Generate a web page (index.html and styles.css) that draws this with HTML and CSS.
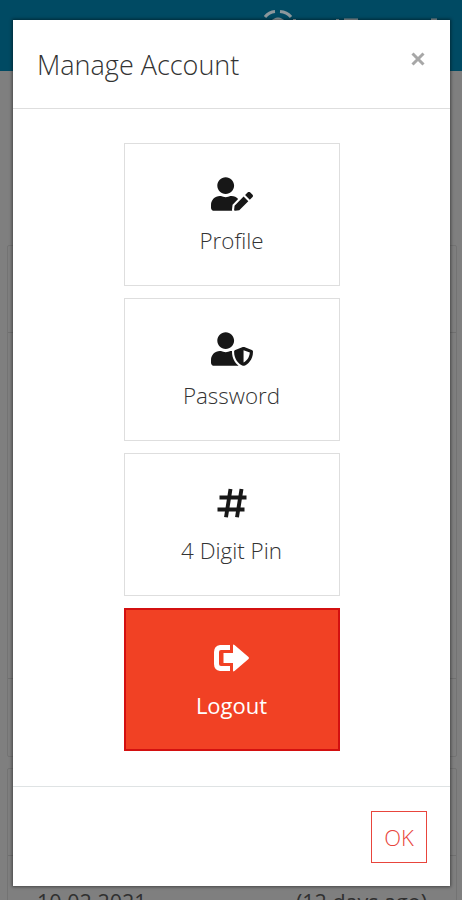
FILE: index.html
```html
<!DOCTYPE html>
<html lang="en">
<head>
<meta charset="utf-8">
<title>Manage Account</title>
<link rel="stylesheet" href="styles.css">
</head>
<body>
<div class="page">
  <header class="topbar">
    <svg width="222" height="30" viewBox="0 0 222 30" fill="none" stroke="#8d989c" stroke-width="3">
      <path d="M25 17Q29 12 35 11.500M40 11.500Q47 12 51 17"/>
      <path d="M31 23Q38 15 45 23M53 20.500h3M96 20.500h3M104 20h14M191 20h6"/>
    </svg>
  </header>
  <section class="panel first"><div class="panel-head"></div><div class="panel-foot"></div></section>
  <section class="panel second"><div class="panel-head"></div><div class="row"><span>10.02.2021</span><span>(12 days ago)</span></div></section>
</div>
<div class="modal" role="dialog" aria-labelledby="title">
  <header class="modal-head">
    <h1 id="title">Manage Account</h1>
    <button class="close" aria-label="Close"><svg width="14" height="14" viewBox="0 0 14 14"><path d="M1.500 1.500l11 11M12.500 1.500l-11 11" stroke="#a7a7a7" stroke-width="3"/></svg></button>
  </header>
  <main class="modal-body">
    <button class="tile">
      <svg width="42" height="34" viewBox="0 0 640 512" fill="currentColor"><path d="M224 256c70.700 0 128-57.300 128-128S294.700 0 224 0 96 57.300 96 128s57.300 128 128 128zm89.600 32h-16.700c-22.200 10.200-46.900 16-72.900 16s-50.600-5.800-72.900-16h-16.700C60.200 288 0 348.200 0 422.400V464c0 26.500 21.500 48 48 48h274.900c-2.400-6.800-3.400-14-2.600-21.300l6.800-60.900 1.200-11.100 7.900-7.900 77.300-77.300c-24.500-27.700-60-45.500-99.900-45.500zm45.300 145.300l-6.800 61c-1.100 10.200 7.500 18.800 17.600 17.600l60.900-6.800 137.900-137.900-71.700-71.700-137.900 137.800zM633 268.900L595.100 231c-9.300-9.300-24.500-9.300-33.800 0l-37.800 37.800-4.100 4.100 71.800 71.700 41.800-41.800c9.300-9.400 9.300-24.500 0-33.900z"/></svg>
      <span>Profile</span>
    </button>
    <button class="tile">
      <svg width="42" height="34" viewBox="0 0 640 512" fill="currentColor"><path d="M622.300 271.100l-115.200-45c-4.100-1.600-12.600-3.700-22.200 0l-115.200 45c-10.700 4.200-17.700 14-17.700 24.900 0 111.600 68.700 188.800 132.900 213.900 9.600 3.700 18 1.600 22.200 0C558.400 489.900 640 420.500 640 296c0-10.900-7-20.700-17.700-24.900zM496 462.400V273.300l95.500 37.300c-5.600 87.100-60.900 135.400-95.500 151.800zM224 256c70.700 0 128-57.300 128-128S294.700 0 224 0 96 57.300 96 128s57.300 128 128 128zm96 40c0-2.500.8-4.800 1.100-7.200-2.500-.1-4.900-.8-7.500-.8h-16.700c-22.200 10.200-46.900 16-72.900 16s-50.600-5.800-72.900-16h-16.700C60.200 288 0 348.200 0 422.400V464c0 26.500 21.500 48 48 48h352c6.800 0 13.300-1.500 19.200-4-54-42.900-99.200-116.700-99.200-212z"/></svg>
      <span>Password</span>
    </button>
    <button class="tile">
      <svg width="42" height="34" viewBox="0 0 42 34" fill="none" stroke="currentColor" stroke-width="3.900" stroke-linejoin="round"><path d="M15 30.300L19.500 2M26 30.300L30.500 2M8.500 10.500H35.500M6.500 22.500H33.500"/></svg>
      <span>4 Digit Pin</span>
    </button>
    <button class="tile danger">
      <svg width="42" height="34" viewBox="1 1 42 34" fill="#fff"><path d="M10 4h10v5H11q-2 0-2 2v12q0 2 2 2h9v5h-10q-6-1-6-7v-12q0-6 6-7z"/><path d="M13.500 12H23V4.500q0-1.500 1.500-.5L38.500 16q1 1 0 2L24.500 30q-1.500 1-1.500-.5V22h-9.500z"/></svg>
      <span>Logout</span>
    </button>
  </main>
  <footer class="modal-foot"><button class="ok">OK</button></footer>
</div>
</body>
</html>
```
FILE: styles.css
```css
* { box-sizing: border-box; }
body { margin: 0; height: 900px; overflow: hidden; background: #7f7f7f; font-family: "Open Sans", sans-serif; font-weight: 300; }
h1, button { margin: 0; padding: 0; font: inherit; }
.page { height: 900px; overflow: hidden; }
.topbar { height: 71px; background: #004a63; display: flex; justify-content: flex-end; }
.panel { margin: 0 5px 0 7px; border: 1px solid #737373; border-radius: 2px; }
.first { margin-top: 174px; height: 512px; display: flex; flex-direction: column; justify-content: space-between; }
.second { margin-top: 11px; height: 160px; }
.panel-head { height: 87px; border-bottom: 1px solid #707070; }
.panel-foot { height: 78px; border-top: 1px solid #707070; }
.row { display: flex; justify-content: space-between; padding: 32px 29px 0 29px; font-size: 21.5px; line-height: 28px; font-weight: 400; color: #303030; }
.modal { position: absolute; left: 13px; top: 20px; width: 437px; height: 866px; background: #fff; box-shadow: 0 0 3px 1px rgba(0, 0, 0, .45); display: flex; flex-direction: column; }
.modal-head { height: 89px; border-bottom: 1px solid #dedede; display: flex; justify-content: space-between; padding: 26px 25px 0 24px; }
.modal-head h1 { font-size: 27px; line-height: 38px; color: #333; white-space: nowrap; }
.close { width: 14px; height: 14px; margin-top: 6px; border: 0; background: none; display: flex; }
.modal-body { flex: 1; display: flex; flex-direction: column; align-items: center; gap: 12px; padding-top: 34px; }
.tile { width: 216px; height: 143px; border: 1px solid #dedede; background: #fff; color: #171717; display: flex; flex-direction: column; align-items: center; padding-top: 33px; }
.tile svg { flex: none; }
.tile span { margin-top: 14px; font-size: 22.4px; line-height: 32px; color: #333; }
.danger { background: #f14124; border: 2px solid #d31010; padding-top: 32px; }
.danger span { margin-top: 13px; color: #fff; font-size: 22px; font-weight: 400; }
.modal-foot { height: 100px; border-top: 1px solid #dfe3e4; display: flex; justify-content: flex-end; padding: 24px 23px 0 0; }
.ok { width: 56px; height: 52px; border: 1px solid #e8453c; background: #fff; color: #e8453c; font-size: 22px; }
```
